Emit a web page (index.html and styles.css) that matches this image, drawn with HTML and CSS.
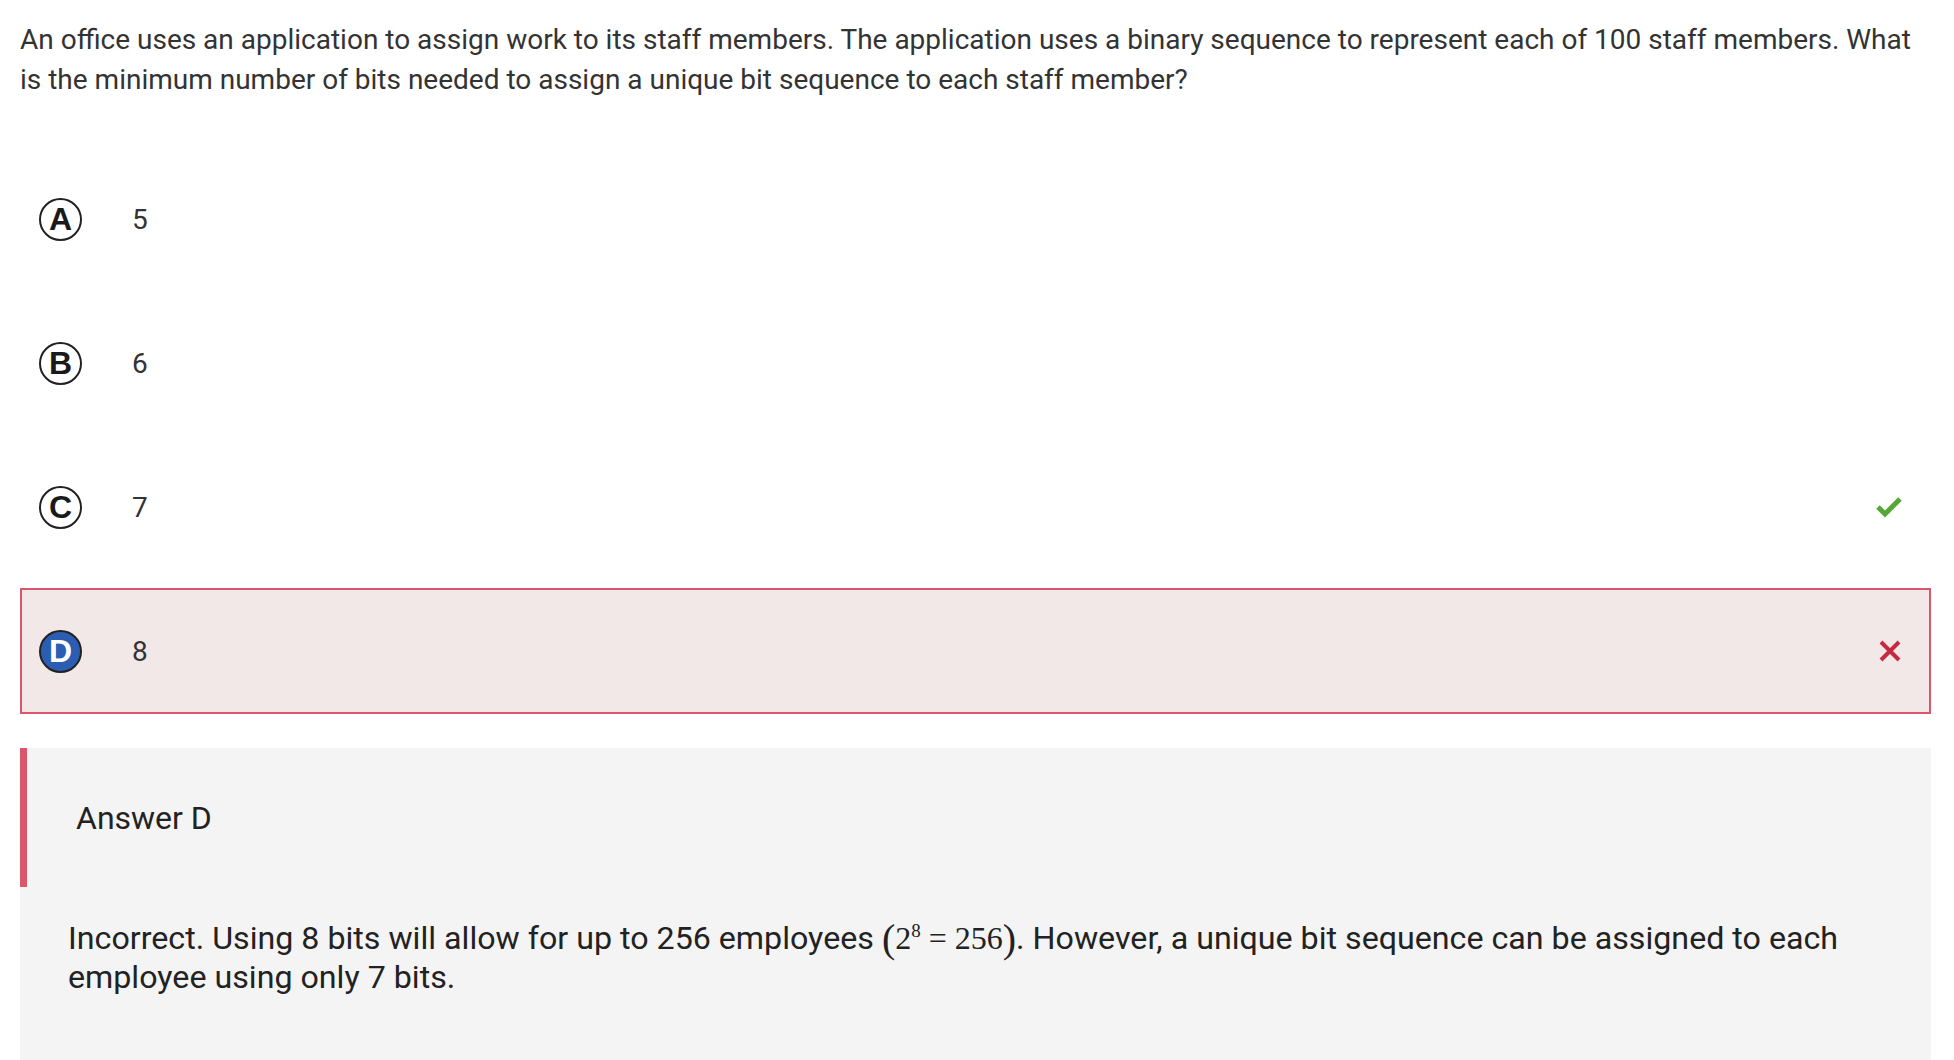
FILE: index.html
```html
<!DOCTYPE html>
<html lang="en">
<head>
<meta charset="utf-8">
<title>Question</title>
<link rel="stylesheet" href="styles.css">
</head>
<body>
<div class="page">
  <p class="question">An office uses an application to assign work to its staff members. The application uses a binary sequence to represent each of 100 staff members. What is the minimum number of bits needed to assign a unique bit sequence to each staff member?</p>

  <div class="options">
    <div class="option">
      <span class="letter">A</span>
      <span class="value">5</span>
    </div>
    <div class="option">
      <span class="letter">B</span>
      <span class="value">6</span>
    </div>
    <div class="option">
      <span class="letter">C</span>
      <span class="value">7</span>
      <svg class="mark" width="26" height="22" viewBox="0 0 26 22">
        <path d="M2 11 L9 18 L24 3" fill="none" stroke="#56a834" stroke-width="5"/>
      </svg>
    </div>
    <div class="option selected wrong">
      <span class="letter">D</span>
      <span class="value">8</span>
      <svg class="mark" width="24" height="24" viewBox="0 0 24 24">
        <path d="M3 3 L21 21 M21 3 L3 21" fill="none" stroke="#c52a43" stroke-width="4"/>
      </svg>
    </div>
  </div>

  <div class="feedback">
    <div class="feedback-head">Answer D</div>
    <p class="feedback-body">Incorrect. Using 8 bits will allow for up to 256 employees <span class="math"><span class="paren">(</span>2<sup>8</sup> = 256<span class="paren">)</span></span>. However, a unique bit sequence can be assigned to each employee using only 7 bits.</p>
  </div>
</div>
</body>
</html>
```

FILE: styles.css
```css
html, body {
  margin: 0;
  padding: 0;
  background: #ffffff;
}

body {
  font-family: Roboto, "Liberation Sans", sans-serif;
  color: #333333;
}

.page {
  padding: 20px 23px 0 20px;
}

.question {
  margin: 0;
  font-size: 28px;
  line-height: 40px;
  color: #333333;
}

.options {
  display: flex;
  flex-direction: column;
  gap: 18px;
  margin-top: 56px;
}

.option {
  display: flex;
  align-items: center;
  height: 126px;
  box-sizing: border-box;
  border: 2px solid transparent;
  padding: 0 27px 0 17px;
}

.option.wrong {
  background: #f3e8e8;
  border-color: #d9566b;
}

.letter {
  width: 43px;
  height: 43px;
  box-sizing: border-box;
  border: 2px solid #222222;
  border-radius: 50%;
  display: flex;
  align-items: center;
  justify-content: center;
  font-family: "Liberation Sans", Arial, sans-serif;
  font-weight: bold;
  font-size: 32px;
  color: #1a1a1a;
  flex: none;
}

.option.selected .letter {
  background: #2b5db2;
  color: #ffffff;
}

.value {
  margin-left: 50px;
  font-size: 28px;
  color: #333333;
  flex: 1;
}

.mark {
  flex: none;
}

.feedback {
  margin-top: 34px;
  background: #f4f4f4;
  min-height: 330px;
}

.feedback-head {
  height: 139px;
  box-sizing: border-box;
  border-left: 7px solid #d9566b;
  padding-left: 49px;
  display: flex;
  align-items: center;
  font-size: 32px;
  color: #222222;
}

.feedback-body {
  margin: 32px 0 0 0;
  padding: 0 48px;
  font-size: 32.2px;
  line-height: 39px;
  color: #222222;
}

.math {
  font-family: "Liberation Serif", "DejaVu Serif", serif;
  font-size: 32px;
}

.math .paren {
  font-size: 40px;
  vertical-align: -3px;
  line-height: 0;
}

.math sup {
  font-size: 19px;
  line-height: 0;
}
```
